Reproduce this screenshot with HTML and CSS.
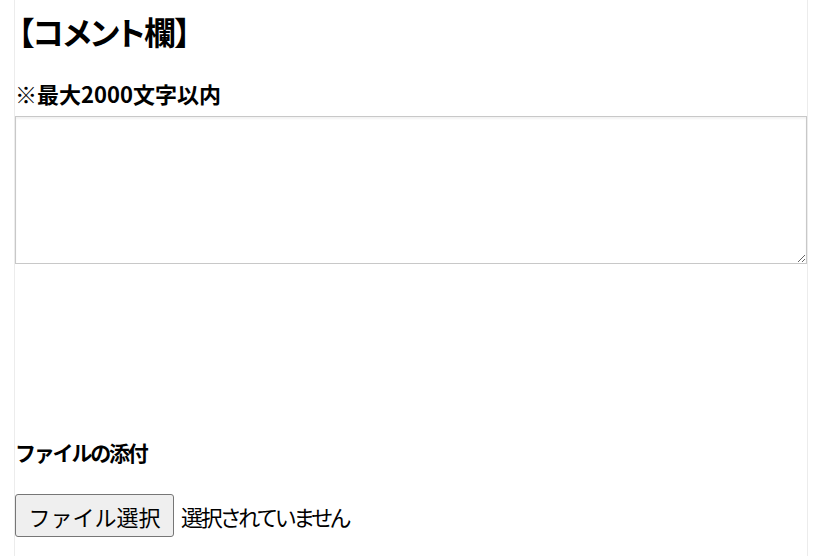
FILE: index.html
```html
<!DOCTYPE html>
<html lang="ja">
<head>
<meta charset="utf-8">
<link rel="stylesheet" href="styles.css">
</head>
<body>
<div class="page">
  <h2 class="title">【コメント欄】</h2>
  <p class="label">※最大2000文字以内</p>
  <textarea class="comment"></textarea>
  <div class="spacer"></div>
  <p class="attach">ファイルの添付</p>
  <div class="file-row">
    <button class="file-btn" type="button">ファイル選択</button>
    <span class="file-status">選択されていません</span>
  </div>
</div>
</body>
</html>
```
FILE: styles.css
```css
html, body {
  margin: 0;
  padding: 0;
  background: #fff;
}
body {
  font-family: "Noto Sans CJK JP", "Noto Sans", sans-serif;
  color: #000;
}
.page {
  margin-left: 14px;
  width: 792px;
  min-height: 556px;
  border-left: 1px solid #ececec;
  border-right: 1px solid #ececec;
  box-sizing: content-box;
}
.title {
  margin: 0;
  padding-top: 9px;
  padding-left: 3px;
  height: 69px;
  font-size: 32px;
  font-weight: 700;
  line-height: 44px;
  font-feature-settings: "palt";
  letter-spacing: -1.2px;
}
.label {
  margin: 0;
  font-size: 22px;
  font-weight: 700;
  line-height: 30px;
  height: 38px;
}
.comment {
  display: block;
  box-sizing: border-box;
  width: 792px;
  height: 148px;
  margin: 0;
  border: 1px solid #c8c8c8;
  box-shadow: inset 0 2px 2px rgba(0,0,0,0.05);
  resize: vertical;
  font-family: inherit;
}
.spacer {
  height: 174px;
}
.attach {
  margin: 0;
  font-size: 21px;
  font-weight: 700;
  line-height: 28px;
  height: 56px;
  letter-spacing: -2.2px;
}
.file-row {
  display: flex;
  align-items: center;
  gap: 7px;
}
.file-btn {
  font-family: inherit;
  font-size: 22px;
  height: 43px;
  width: 159px;
  padding: 0 10px;
  background: #efefef;
  border: 1px solid #767676;
  border-radius: 3px;
  color: #000;
}
.file-status {
  font-size: 22px;
  font-feature-settings: "palt";
  letter-spacing: -2.2px;
}
```
